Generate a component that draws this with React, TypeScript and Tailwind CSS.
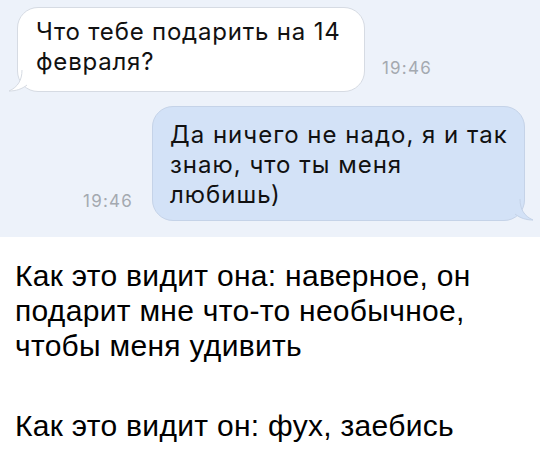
const Tail = ({ side, fill, stroke }: { side: "left" | "right"; fill: string; stroke: string }) => {
  if (side === "left") {
    return (
      <svg className="absolute -left-[10px] bottom-[-1px]" width="24" height="22" viewBox="0 0 24 22">
        <path d="M14 0 C14 10 10 17 1 21 C8 21 14 19 19 15 L24 15 L24 0 Z" fill={fill} />
        <path d="M14 0 C14 10 10 17 1 21 C8 21 14 19 19 15" fill="none" stroke={stroke} strokeWidth="1" />
      </svg>
    );
  }
  return (
    <svg className="absolute -right-[10px] bottom-[-1px]" width="24" height="22" viewBox="0 0 24 22">
      <path d="M10 0 C10 10 14 17 23 21 C16 21 10 19 5 15 L0 15 L0 0 Z" fill={fill} />
      <path d="M10 0 C10 10 14 17 23 21 C16 21 10 19 5 15" fill="none" stroke={stroke} strokeWidth="1" />
    </svg>
  );
};

export default function App() {
  return (
    <div className="w-[540px] h-[470px] bg-white overflow-hidden">
      <div className="bg-[#edf2fa] h-[237px] pt-[7px] px-[15px] flex flex-col font-['Inter',sans-serif]">
        <div className="flex items-end ml-[2px]">
          <div className="relative w-[348px] h-[85px] bg-white border border-[#d6dbe3] rounded-[21px] pl-[18px] pr-[4px] pt-[9px] text-[24px] leading-[30px] tracking-[0.8px] text-[#111]">
            Что тебе подарить на 14
            <br />
            февраля?
            <Tail side="left" fill="#ffffff" stroke="#d6dbe3" />
          </div>
          <span className="ml-[17px] mb-[14px] text-[17px] leading-[20px] tracking-[1.2px] text-[#a4a9b0]">19:46</span>
        </div>
        <div className="flex items-end justify-end mt-[14px]">
          <span className="mr-[19px] mb-[10px] text-[17px] leading-[20px] tracking-[1.2px] text-[#a4a9b0]">19:46</span>
          <div className="relative w-[373px] h-[115px] bg-[#d3e2f7] border border-[#c5d3e8] rounded-[21px] pl-[17px] pr-[4px] pt-[13px] text-[24px] leading-[30px] tracking-[1px] text-[#111]">
            Да ничего не надо, я и так
            <br />
            знаю, что ты меня
            <br />
            любишь)
            <Tail side="right" fill="#d3e2f7" stroke="#c5d3e8" />
          </div>
        </div>
      </div>
      <div className="px-[15px] pt-[21px] font-['Liberation_Sans',Arial,sans-serif] text-[30px] leading-[35px] tracking-[0.3px] text-black">
        <p>Как это видит она: наверное, он</p>
        <p>подарит мне что-то необычное,</p>
        <p>чтобы меня удивить</p>
        <p className="mt-[45px]">Как это видит он: фух, заебись</p>
      </div>
    </div>
  );
}
